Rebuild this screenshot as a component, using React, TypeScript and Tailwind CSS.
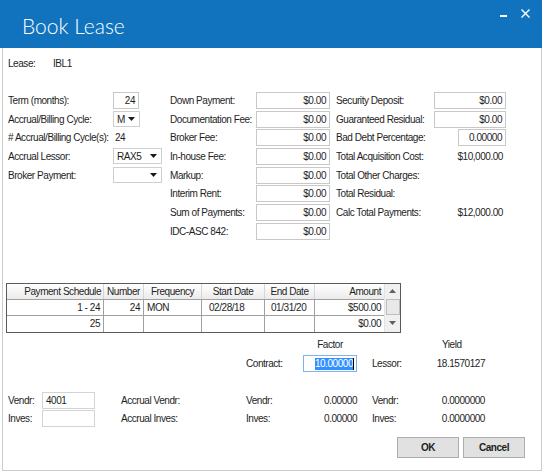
import React from 'react'

const font = { fontFamily: '"Liberation Sans", Arial, sans-serif' }

function TextBox({ value, className = '', align = 'right' }: { value?: string; className?: string; align?: 'left' | 'right' }) {
  return (
    <div
      className={`h-[17px] border border-[#c8c8c8] bg-white flex items-center px-[3px] ${
        align === 'right' ? 'justify-end' : 'justify-start'
      } ${className}`}
    >
      {value}
    </div>
  )
}

function Dropdown({ value, className = '' }: { value?: string; className?: string }) {
  return (
    <div className={`h-[16px] border border-[#cfcfcf] bg-white flex items-center justify-between pl-[3px] pr-[4px] ${className}`}>
      <span>{value}</span>
      <svg width="7" height="4" viewBox="0 0 7 4">
        <path d="M0 0 L7 0 L3.5 4 Z" fill="#1a1a1a" />
      </svg>
    </div>
  )
}

function Row({ children }: { children: React.ReactNode }) {
  return <div className="flex items-center h-[18.7px] whitespace-nowrap">{children}</div>
}

const midRows = [
  'Down Payment:',
  'Documentation Fee:',
  'Broker Fee:',
  'In-house Fee:',
  'Markup:',
  'Interim Rent:',
  'Sum of Payments:',
  'IDC-ASC 842:',
]

const cols = [
  { name: 'Payment Schedule', w: 'w-[97px]', head: 'text-right pr-[2px]' },
  { name: 'Number', w: 'w-[40px]', head: 'text-center' },
  { name: 'Frequency', w: 'w-[58px]', head: 'text-center' },
  { name: 'Start Date', w: 'w-[63px]', head: 'text-center' },
  { name: 'End Date', w: 'w-[50px]', head: 'text-center' },
  { name: 'Amount', w: 'w-[69px]', head: 'text-right pr-[3px]' },
]

const rows = [
  ['1 - 24', '24', 'MON', '02/28/18', '01/31/20', '$500.00'],
  ['25', '', '', '', '', '$0.00'],
]

const cellAlign = [
  'text-right pr-[3px]',
  'text-right pr-[3px]',
  'text-left pl-[3px]',
  'text-left pl-[7px]',
  'text-left pl-[6px]',
  'text-right pr-[3px]',
]

function ScheduleGrid() {
  return (
    <div className="ml-[-2px] w-[395px] border border-[#5a5a5a] flex">
      <div className="flex flex-col">
        <div className="flex h-[16px] border-b border-[#a0a0a0] bg-gradient-to-b from-white to-[#ebebeb]">
          {cols.map((c, i) => (
            <div
              key={c.name}
              className={`${c.w} ${c.head} leading-[15px] ${i < cols.length - 1 ? 'border-r border-[#d6d6d6]' : ''}`}
            >
              {c.name}
            </div>
          ))}
        </div>
        {rows.map((r, ri) => (
          <div key={ri} className={`flex h-[16px] ${ri === 0 ? 'border-b border-[#a0a0a0]' : 'h-[15px]'}`}>
            {r.map((v, i) => (
              <div
                key={i}
                className={`${cols[i].w} ${cellAlign[i]} leading-[15px] ${i < r.length - 1 ? 'border-r border-[#a0a0a0]' : ''}`}
              >
                {v}
              </div>
            ))}
          </div>
        ))}
      </div>
      {/* scrollbar */}
      <div className="w-[16px] bg-[#f0f0f0] border-l border-[#e2e2e2] flex flex-col items-center">
        <div className="h-[15px] flex items-center justify-center">
          <svg width="7" height="4" viewBox="0 0 7 4">
            <path d="M0 4 L3.5 0 L7 4 Z" fill="#606060" />
          </svg>
        </div>
        <div className="w-[14px] h-[16px] border border-[#bdbdbd] bg-[#e8e8e8]" />
        <div className="flex-1 flex items-center justify-center">
          <svg width="7" height="4" viewBox="0 0 7 4">
            <path d="M0 0 L7 0 L3.5 4 Z" fill="#606060" />
          </svg>
        </div>
      </div>
    </div>
  )
}

export default function App() {
  return (
    <div className="w-[542px] h-[473px] bg-white text-[10px] tracking-[-0.45px] text-[#1e1e1e]" style={font}>
      {/* Title bar */}
      <div className="h-[48px] bg-[#1173bd] flex justify-between text-white">
        <div
          className="pl-[22px] pt-[15px] text-[21px] leading-[21px] font-light tracking-normal"
          style={{ fontFamily: 'Lato, "Open Sans", sans-serif' }}
        >
          Book Lease
        </div>
        <div className="flex items-start pt-[9px] pr-[12px] gap-[14px]">
          <div className="mt-[6px] w-[7px] h-[2px] bg-white" />
          <svg width="9" height="9" viewBox="0 0 9 9">
            <path d="M0.5 0.5 L8.5 8.5 M8.5 0.5 L0.5 8.5" stroke="white" strokeWidth="1.4" />
          </svg>
        </div>
      </div>

      {/* Body */}
      <div className="ml-[2px] w-[540px] h-[423px] border-x border-b border-[#cccccc] pl-[5px] flex flex-col">
        <div className="mt-[8px] h-[14px] flex items-center">
          <span className="w-[45px]">Lease:</span>
          <span>IBL1</span>
        </div>

        <div className="mt-[21px] flex">
          {/* column 1 */}
          <div className="w-[162px] flex flex-col">
            <Row>
              <span className="w-[105px]">Term (months):</span>
              <TextBox value="24" className="w-[26px]" />
            </Row>
            <Row>
              <span className="w-[105px]">Accrual/Billing Cycle:</span>
              <Dropdown value="M" className="w-[27px]" />
            </Row>
            <Row>
              <span className="w-[107px]"># Accrual/Billing Cycle(s):</span>
              <span>24</span>
            </Row>
            <Row>
              <span className="w-[105px]">Accrual Lessor:</span>
              <Dropdown value="RAX5" className="w-[49px]" />
            </Row>
            <Row>
              <span className="w-[105px]">Broker Payment:</span>
              <Dropdown className="w-[49px]" />
            </Row>
          </div>

          {/* column 2 */}
          <div className="w-[166px] flex flex-col">
            {midRows.map((label) => (
              <Row key={label}>
                <span className="w-[86px]">{label}</span>
                <TextBox value="$0.00" className="w-[74px]" />
              </Row>
            ))}
          </div>

          {/* column 3 */}
          <div className="flex flex-col">
            <Row>
              <span className="w-[98px]">Security Deposit:</span>
              <TextBox value="$0.00" className="w-[72px]" />
            </Row>
            <Row>
              <span className="w-[98px]">Guaranteed Residual:</span>
              <TextBox value="$0.00" className="w-[72px]" />
            </Row>
            <Row>
              <span className="w-[98px]">Bad Debt Percentage:</span>
              <TextBox value="0.00000" className="ml-[24px] w-[48px] border-[#b4b4b4]" />
            </Row>
            <Row>
              <span className="w-[98px]">Total Acquisition Cost:</span>
              <span className="w-[72px] text-right pr-[3px]">$10,000.00</span>
            </Row>
            <Row>
              <span className="w-[98px]">Total Other Charges:</span>
            </Row>
            <Row>
              <span className="w-[98px]">Total Residual:</span>
            </Row>
            <Row>
              <span className="w-[98px]">Calc Total Payments:</span>
              <span className="w-[72px] text-right pr-[3px]">$12,000.00</span>
            </Row>
          </div>
        </div>

        <div className="mt-[42px]">
          <ScheduleGrid />
        </div>

        {/* Factor / Yield */}
        <div className="mt-[5px] h-[14px] flex items-center">
          <span className="w-[295px]" />
          <span className="w-[54px] text-center">Factor</span>
          <span className="w-[79px]" />
          <span className="pl-[6px]">Yield</span>
        </div>
        <div className="mt-[3px] h-[18px] flex items-center">
          <span className="w-[238px]" />
          <span className="w-[57px]">Contract:</span>
          <div className="w-[54px] h-[17px] border border-[#7eb4ea] flex items-center justify-end pr-[2px]">
            <span className="bg-[#3390ff] text-white leading-[12px]">10.00000</span>
            <span className="w-[1px] h-[12px] bg-black" />
          </div>
          <span className="w-[15px]" />
          <span className="w-[64px]">Lessor:</span>
          <span className="w-[49px] text-right">18.1570127</span>
        </div>

        {[
          { l: 'Vendr:', v: '4001' },
          { l: 'Inves:', v: '' },
        ].map((r, i) => (
          <div key={r.l} className={`${i === 0 ? 'mt-[19px]' : ''} h-[18px] flex items-center`}>
            <span className="w-[34px]">{r.l}</span>
            <TextBox value={r.v} align="left" className="w-[53px] border-[#d4d4d4]" />
            <span className="w-[26px]" />
            <span className="w-[125px]">Accrual {r.l}</span>
            <span className="w-[57px]">{r.l}</span>
            <span className="w-[54px] text-right">0.00000</span>
            <span className="w-[15px]" />
            <span className="w-[64px]">{r.l}</span>
            <span className="w-[49px] text-right">0.0000000</span>
          </div>
        ))}

        <div className="mt-[9px] flex justify-end pr-[16px] gap-[4px]">
          <button className="w-[62px] h-[21px] bg-[#e1e1e1] border border-[#adadad] font-bold text-[10px]">OK</button>
          <button className="w-[62px] h-[21px] bg-[#e1e1e1] border border-[#adadad] font-bold text-[10px]">Cancel</button>
        </div>
      </div>
    </div>
  )
}
